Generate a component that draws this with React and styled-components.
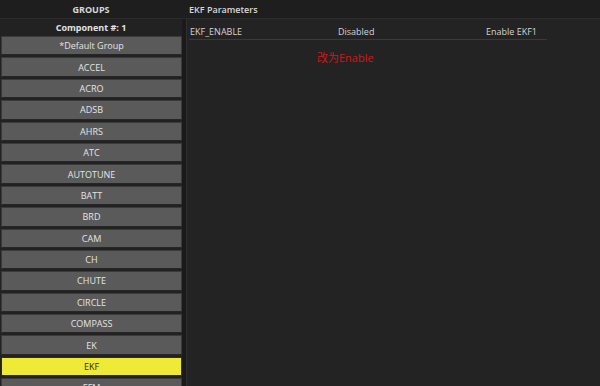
import React from "react";
import styled, { createGlobalStyle } from "styled-components";

const GlobalStyle = createGlobalStyle`
  * {
    box-sizing: border-box;
  }

  body {
    margin: 0;
    background: #222222;
    font-family: "Open Sans", "Noto Sans CJK SC", sans-serif;
    overflow: hidden;
  }
`;

const Screen = styled.div`
  width: 600px;
  height: 386px;
  display: flex;
  flex-direction: column;
  background: #222222;
  overflow: hidden;
`;

const TopBar = styled.div`
  height: 19px;
  display: flex;
  align-items: center;
  background: #1e1e1e;
  border-bottom: 1px solid #2b2b2b;
  flex-shrink: 0;
`;

const GroupsTitle = styled.div`
  width: 182px;
  text-align: center;
  font-size: 9px;
  font-weight: 700;
  color: #d8d8d8;
`;

const PanelTitle = styled.div`
  padding-left: 7px;
  font-size: 9px;
  font-weight: 600;
  color: #d8d8d8;
`;

const Body = styled.div`
  flex: 1;
  display: flex;
  min-height: 0;
`;

const GroupsColumn = styled.div`
  width: 182px;
  display: flex;
  flex-direction: column;
  flex-shrink: 0;
  overflow: hidden;
`;

const ComponentLabel = styled.div`
  height: 17px;
  flex-shrink: 0;
  display: flex;
  align-items: center;
  justify-content: center;
  font-size: 9px;
  font-weight: 700;
  color: #e2e2e2;
`;

const GroupList = styled.div`
  display: flex;
  flex-direction: column;
  flex-shrink: 0;
  gap: 2px;
  padding-left: 1px;
`;

const GroupButton = styled.div`
  height: 19.4px;
  flex-shrink: 0;
  display: flex;
  align-items: center;
  justify-content: center;
  font-size: 9px;
  color: ${(p) => (p.$active ? "#2a2a10" : "#e4e4e4")};
  background: ${(p) => (p.$active ? "#eeea36" : "#5a5a5a")};
  border: 1px solid ${(p) => (p.$active ? "#2f2f1a" : "#3a3a3a")};
  border-bottom-color: #262626;
`;

const Gutter = styled.div`
  width: 4px;
  background: #1a1a1a;
  flex-shrink: 0;
`;

const ParamsPanel = styled.div`
  flex: 1;
  border-left: 1px solid #2e2e2e;
  background: #232323;
  padding: 4px 0 0 2px;
`;

const ParamRow = styled.div`
  width: 358px;
  display: grid;
  grid-template-columns: 148px 148px auto;
  height: 17px;
  align-items: center;
  border-bottom: 1px solid #3a3a3a;
  font-size: 9px;
  color: #d4d4d4;
`;

const Cell = styled.div`
  padding-left: 1px;
  white-space: nowrap;
`;

const Note = styled.div`
  margin: 9px 0 0 128px;
  font-size: 11px;
  color: #d01818;
`;

const groups = [
  "*Default Group",
  "ACCEL",
  "ACRO",
  "ADSB",
  "AHRS",
  "ATC",
  "AUTOTUNE",
  "BATT",
  "BRD",
  "CAM",
  "CH",
  "CHUTE",
  "CIRCLE",
  "COMPASS",
  "EK",
  "EKF",
  "EFM",
];

const App = () => (
  <>
    <GlobalStyle />
    <Screen>
      <TopBar>
        <GroupsTitle>GROUPS</GroupsTitle>
        <PanelTitle>EKF Parameters</PanelTitle>
      </TopBar>
      <Body>
        <GroupsColumn>
          <ComponentLabel>Component #: 1</ComponentLabel>
          <GroupList>
            {groups.map((g) => (
              <GroupButton key={g} $active={g === "EKF"}>
                {g}
              </GroupButton>
            ))}
          </GroupList>
        </GroupsColumn>
        <Gutter />
        <ParamsPanel>
          <ParamRow>
            <Cell>EKF_ENABLE</Cell>
            <Cell>Disabled</Cell>
            <Cell>Enable EKF1</Cell>
          </ParamRow>
          <Note>改为Enable</Note>
        </ParamsPanel>
      </Body>
    </Screen>
  </>
);

export default App;
